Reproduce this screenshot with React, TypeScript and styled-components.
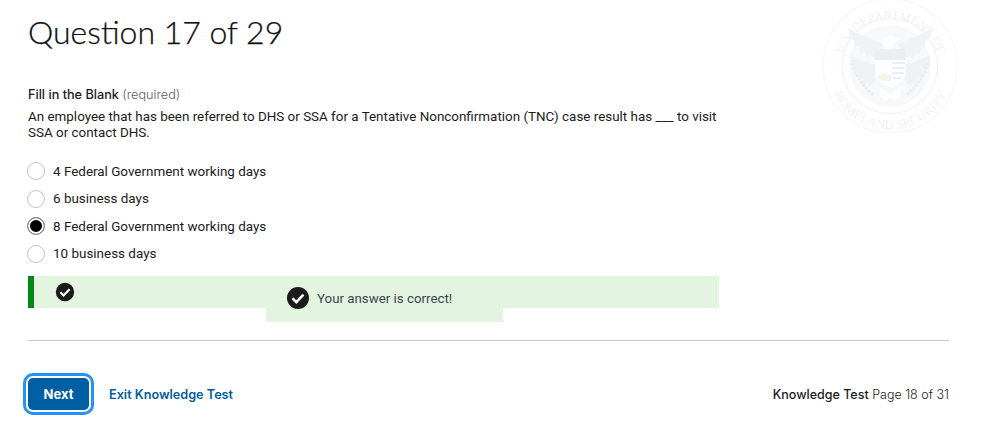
import styled, { createGlobalStyle } from "styled-components";

const GlobalStyle = createGlobalStyle`
  html, body {
    margin: 0;
    padding: 0;
    background: #fff;
  }
  body {
    font-family: "Inter", "Roboto", sans-serif;
    color: #1b1b1b;
  }
`;

const Page = styled.div`
  position: relative;
  width: 981px;
  height: 436px;
  overflow: hidden;
  padding: 0 32px 0 28px;
  box-sizing: border-box;
`;

const Seal = styled.svg`
  position: absolute;
  top: -3px;
  left: 821px;
  width: 138px;
  height: 138px;
`;

const Title = styled.h1`
  margin: 0;
  padding-top: 11px;
  font-family: "Lato", sans-serif;
  font-size: 32px;
  line-height: 42px;
  font-weight: 300;
  color: #111;
  -webkit-text-stroke: 0.25px #111;
`;

const Question = styled.div`
  width: 691px;
  margin-top: 34px;
`;

const Prompt = styled.div`
  font-size: 12.7px;
  line-height: 16px;
  font-weight: 500;
`;

const Required = styled.span`
  font-weight: 300;
  color: #5c5c5c;
`;

const Body = styled.p`
  margin: 6px 0 0;
  font-family: "Roboto", sans-serif;
  font-size: 13.42px;
  line-height: 16px;
`;

const Options = styled.div`
  display: flex;
  flex-direction: column;
  gap: 5.5px;
  margin-top: 19px;
`;

const Option = styled.label`
  display: flex;
  align-items: center;
  gap: 8px;
  height: 22px;
  margin-left: -1px;
  font-family: "Roboto", sans-serif;
  font-size: 13.45px;
`;

const Radio = styled.span<{ $checked?: boolean }>`
  width: 18px;
  height: 18px;
  border-radius: 50%;
  box-sizing: border-box;
  border: 1px solid ${(p) => (p.$checked ? "#8f8f8f" : "#c4c4c4")};
  background: ${(p) => (p.$checked ? "#000" : "#fff")};
  box-shadow: ${(p) => (p.$checked ? "inset 0 0 0 2px #fff" : "none")};
`;

const Alert = styled.div`
  display: flex;
  align-items: flex-start;
  height: 32px;
  margin-top: 11.5px;
  box-sizing: border-box;
  border-left: 6px solid #008817;
  background: #e3f4e0;
`;

const AlertIcon = styled.svg`
  flex: none;
  width: 20px;
  height: 20px;
  margin: 6px 0 0 21px;
`;

const AlertMessage = styled.div`
  display: flex;
  align-items: center;
  gap: 7px;
  width: 237px;
  height: 46px;
  margin-left: 191px;
  padding: 0 0 2px 20px;
  box-sizing: border-box;
  background: #e3f4e0;
  font-family: "Roboto", sans-serif;
  font-size: 13.3px;
  color: #3d4551;
`;

const MessageIcon = styled.svg`
  flex: none;
  width: 24px;
  height: 24px;
`;

const Divider = styled.hr`
  margin: 32px 0 0;
  border: 0;
  border-top: 1px solid #c9c9c9;
`;

const Footer = styled.div`
  display: flex;
  align-items: center;
  justify-content: space-between;
  margin-top: 37px;
`;

const Actions = styled.div`
  display: flex;
  align-items: center;
  gap: 20px;
`;

const NextButton = styled.button`
  width: 61px;
  height: 32px;
  padding: 0;
  border: 0;
  border-radius: 5px;
  background: #005ea2;
  color: #fff;
  font-family: "Inter", sans-serif;
  font-size: 13px;
  font-weight: 700;
  outline: 3.5px solid #2491ff;
  outline-offset: 2.5px;
`;

const ExitLink = styled.a`
  font-size: 12.65px;
  font-weight: 600;
  color: #005ea2;
`;

const PageInfo = styled.div`
  font-size: 12.5px;
  color: #1b1b1b;
`;

const PageInfoLabel = styled.span`
  font-weight: 500;
`;

const PageInfoCount = styled.span`
  font-weight: 300;
`;

const options = [
  "4 Federal Government working days",
  "6 business days",
  "8 Federal Government working days",
  "10 business days",
];

const CheckCircle = () => (
  <>
    <circle cx="12" cy="12" r="11" fill="#1b1b1b" />
    <path d="M6.6 12.4l3.7 3.7 7.2-7.4" fill="none" stroke="#fff" strokeWidth="2.6" />
  </>
);

// left half of the eagle, mirrored for the right side
const SealWing = () => (
  <>
    <path
      d="M27 31 L38 37 L51 43 L62 47 L58 52 L54 61 L49 58 L47 62 L43 55 L40 57 L38 50 L34 50 L33 43 L29 42 Z"
      fill="#eff3f6"
    />
    <path
      d="M29 58 L37 62 L54 68 L54 84 L48 90 L46 86 L42 87 L41 81 L36 80 L37 74 L32 72 L33 66 L29 64 Z"
      fill="#eef2f5"
    />
    <path d="M31 66 Q36 84 52 98" fill="none" stroke="#ebedf0" strokeWidth="3" strokeDasharray="3 1" />
  </>
);

function App() {
  return (
    <Page>
      <GlobalStyle />
      <Seal viewBox="0 0 138 138">
        <defs>
          <path id="sealTop" d="M20 82 A50 50 0 1 1 118 82" />
          <path id="sealBottom" d="M7 58 A63 63 0 1 0 131 58" />
        </defs>
        <circle cx="69" cy="69" r="67" fill="none" stroke="#f9fafb" strokeWidth="2" />
        <circle cx="69" cy="69" r="47.5" fill="none" stroke="#faf2f3" strokeWidth="1.5" />
        <circle cx="69" cy="69" r="41" fill="#f6f8fa" />
        <text fontFamily="Liberation Serif, serif" fontSize="12.5" fill="#f0f2f5" textAnchor="middle">
          <textPath href="#sealTop" startOffset="50%">U.S. DEPARTMENT OF</textPath>
        </text>
        <text fontFamily="Liberation Serif, serif" fontSize="13" fill="#f0f2f5" textAnchor="middle">
          <textPath href="#sealBottom" startOffset="50%">HOMELAND SECURITY</textPath>
        </text>
        <SealWing />
        <g transform="translate(138 0) scale(-1 1)">
          <SealWing />
        </g>
        <path d="M62 42 q7 -6 13 -1 l4 2 l-6 2 l-1 7 h-8 Z" fill="#fcfdfe" />
        <rect x="54" y="52" width="31" height="11" fill="#ebeef2" />
        <path d="M54 63 h31 v13 q-1 9 -15.500 15 q-14.500 -6 -15.500 -15 Z" fill="#fcfdfe" />
        <path d="M71 66 h13 M71 71 h13 M71 76 h12 M71 81 h9" stroke="#ebeef2" strokeWidth="2" />
        <path d="M56 80 l7 -4 l7 3 v5 l-9 0 Z" fill="#f3f4ea" />
        <path d="M58 90 L69 96 L80 90 L79 100 L74 104 L69 101 L64 104 L59 100 Z" fill="#fcfdfe" />
      </Seal>
      <Title>Question 17 of 29</Title>
      <Question>
        <Prompt>
          Fill in the Blank <Required>(required)</Required>
        </Prompt>
        <Body>
          An employee that has been referred to DHS or SSA for a Tentative Nonconfirmation (TNC) case
          result has ___ to visit SSA or contact DHS.
        </Body>
        <Options>
          {options.map((o, i) => (
            <Option key={o}>
              <Radio $checked={i === 2} />
              {o}
            </Option>
          ))}
        </Options>
        <Alert>
          <AlertIcon viewBox="0 0 24 24">
            <CheckCircle />
          </AlertIcon>
          <AlertMessage>
            <MessageIcon viewBox="0 0 24 24">
              <CheckCircle />
            </MessageIcon>
            Your answer is correct!
          </AlertMessage>
        </Alert>
      </Question>
      <Divider />
      <Footer>
        <Actions>
          <NextButton>Next</NextButton>
          <ExitLink>Exit Knowledge Test</ExitLink>
        </Actions>
        <PageInfo>
          <PageInfoLabel>Knowledge Test</PageInfoLabel> <PageInfoCount>Page 18 of 31</PageInfoCount>
        </PageInfo>
      </Footer>
    </Page>
  );
}

export default App;
